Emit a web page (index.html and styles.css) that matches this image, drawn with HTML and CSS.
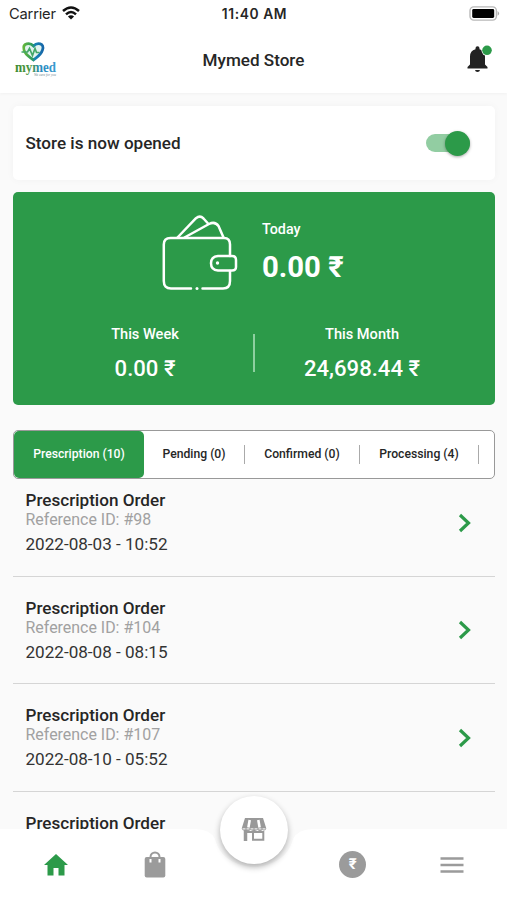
FILE: index.html
```html
<!DOCTYPE html>
<html lang="en">
<head>
<meta charset="utf-8">
<title>Mymed Store</title>
<link rel="stylesheet" href="styles.css">
</head>
<body>
<div class="app">
  <header class="top">
    <div class="status">
      <div class="carrier">Carrier
        <svg width="18" height="14" viewBox="0 0 18 14" fill="none" stroke="#111" stroke-width="2.5"><path d="M1 5Q9-2 17 5M4 8.3Q9 3.6 14 8.3"/><path d="M9 13.6L5.9 10.5Q9 7.8 12.1 10.5Z" fill="#111" stroke="none"/></svg>
      </div>
      <div class="clock">11:40 AM</div>
      <svg class="battery" width="31" height="15" viewBox="0 0 31 15"><rect x="1" y=".9" width="26.4" height="13.2" rx="3.8" fill="#fff" stroke="#b8b8b8" stroke-width="1.4"/><rect x="3.200" y="3" width="22" height="9" rx="1.4" fill="#000"/><path d="M28.6 5q3 2.400 0 4.800z" fill="#aaa"/></svg>
    </div>
    <div class="bar">
      <svg class="logo" width="44" height="36" viewBox="0 0 44 36">
        <defs>
          <linearGradient id="heart"><stop offset="0" stop-color="#62b53b"/><stop offset=".45" stop-color="#2c9b62"/><stop offset=".6" stop-color="#1683b5"/><stop offset="1" stop-color="#1767a8"/></linearGradient>
          <linearGradient id="word"><stop offset="0" stop-color="#3d8a32"/><stop offset=".4" stop-color="#4b9a49"/><stop offset=".6" stop-color="#2489bd"/><stop offset="1" stop-color="#3c9bd0"/></linearGradient>
        </defs>
        <path d="M10 8C8 1 16 0 19.500 4C23 0 31 1 28.500 8C27 13 23 15 19.500 18C16 15 11 13 10 8Z" fill="#e2f3ef" stroke="url(#heart)" stroke-width="2.700"/>
        <path d="M7.500 10h6l2-3.500 3 7 2.500-7 1.500 4h3" fill="none" stroke="#43a768" stroke-width="1.700"/>
        <text class="word" x="1" y="29.500" textLength="41" lengthAdjust="spacingAndGlyphs" fill="url(#word)">mymed</text>
        <text class="tag" x="20" y="33.500" textLength="22" lengthAdjust="spacingAndGlyphs">We care for you</text>
      </svg>
      <h1>Mymed Store</h1>
      <svg class="bell" width="26" height="30" viewBox="0 0 26 30"><path d="M.5 24.500v-1.500l2.500-2.500V12.500Q3 6.500 8.500 5.200V4.200a2 2 0 0 1 4 0v1Q18 6.500 18 12.500V20.500l2.500 2.500v1.500zM8 26h5q-.3 2.100-2.500 2.100T8 26z" fill="#222"/><circle cx="20" cy="6.300" r="5.500" fill="#fff"/><circle cx="20" cy="6.300" r="4.800" fill="#2c9a49"/></svg>
    </div>
  </header>

  <main class="content">
    <section class="store">
      <span>Store is now opened</span>
      <div class="switch"><i></i></div>
    </section>

    <section class="earnings">
      <div class="today">
        <svg width="76" height="76" viewBox="0 0 76 76" fill="none" stroke="#fff" stroke-width="2.500" stroke-linecap="round" stroke-linejoin="round"><path d="M29 73.500H9Q1.800 73.500 1.800 66V29.500Q1.800 23 8.500 23H62Q68 23 68 29.500V41M68 56V66Q68 73.500 61 73.500H40.500"/><path d="M15.500 22.500L34 3.200Q38 0 41.500 3.500L46.500 9M22.500 22.500L47 9Q53 6 56.500 11L61.500 22.500"/><path d="M56 41H70Q74 41 74 45V52Q74 55.500 70 55.500H56Q49 55 49 48.300T56 41Z"/><g fill="#fff" stroke="none"><circle cx="55.500" cy="48" r="1.700"/><circle cx="35" cy="73.500" r="1.500"/></g></svg>
        <div><div class="label">Today</div><div class="amount big">0.00 ₹</div></div>
      </div>
      <div class="periods">
        <div class="period"><div class="label">This Week</div><div class="amount">0.00 ₹</div></div>
        <div class="rule"></div>
        <div class="period month"><div class="label">This Month</div><div class="amount">24,698.44 ₹</div></div>
      </div>
    </section>

    <nav class="tabs">
      <span class="tab active">Prescription (10)</span>
      <span class="tab pending">Pending (0)</span>
      <span class="tab confirmed">Confirmed (0)</span>
      <span class="tab processing">Processing (4)</span>
    </nav>

    <section class="orders">
      <article class="order"><div><h2>Prescription Order</h2><p class="ref">Reference ID: #98</p><p class="date">2022-08-03 - 10:52</p></div><svg width="14" height="20" viewBox="0 0 14 20"><path d="M2 2l8.500 8L2 18" fill="none" stroke="#2c9a49" stroke-width="3.200"/></svg></article>
      <article class="order"><div><h2>Prescription Order</h2><p class="ref">Reference ID: #104</p><p class="date">2022-08-08 - 08:15</p></div><svg width="14" height="20" viewBox="0 0 14 20"><path d="M2 2l8.500 8L2 18" fill="none" stroke="#2c9a49" stroke-width="3.200"/></svg></article>
      <article class="order"><div><h2>Prescription Order</h2><p class="ref">Reference ID: #107</p><p class="date">2022-08-10 - 05:52</p></div><svg width="14" height="20" viewBox="0 0 14 20"><path d="M2 2l8.500 8L2 18" fill="none" stroke="#2c9a49" stroke-width="3.200"/></svg></article>
      <article class="order"><div><h2>Prescription Order</h2></div></article>
    </section>
  </main>

  <nav class="dock">
    <svg class="dock-shape" width="507" height="71" viewBox="0 0 507 71"><path d="M0 0H195Q210 0 215 10C224 47 284 47 293 10Q298 0 313 0H507V71H0Z" fill="#fff"/></svg>
    <div class="item"><svg width="26" height="24" viewBox="0 0 26 24"><path d="M13 1L25 12H21.500V22.500H15.500V15H10.500V22.500H4.500V12H1Z" fill="#2c9a49"/></svg></div>
    <div class="item"><svg width="22" height="28" viewBox="0 0 22 28"><path d="M6.500 9V6a4.500 4.500 0 0 1 9 0V9" fill="none" stroke="#9b9b9b" stroke-width="2"/><rect x=".7" y="6" width="20.600" height="20.500" rx="2" fill="#9b9b9b"/><path d="M6.500 8v3.500M15.500 8v3.500" stroke="#fff" stroke-width="2"/></svg></div>
    <div class="item"></div>
    <div class="item"><div class="coin">₹</div></div>
    <div class="item"><svg width="24" height="18" viewBox="0 0 24 18"><path d="M.5 2.500h23M.5 9h23M.5 15.500h23" stroke="#9b9b9b" stroke-width="2.300"/></svg></div>
    <div class="fab"><svg width="26" height="26" viewBox="0 0 26 26"><path d="M4 1H22L25.300 11.500Q24.500 14.500 21.500 13Q19 15 16.500 13Q13 15 9.500 13Q7 15 4.500 13Q1.500 14.500.7 11.500Z" fill="#999"/><path d="M8.700 3L7.400 10.500M17.300 3L18.600 10.500" stroke="#fff" stroke-width="2.600"/><path d="M1.500 11.900H24.500" stroke="#fff" stroke-width="1" stroke-dasharray="3 1"/><path d="M4.500 13V24" stroke="#999" stroke-width="3.500"/><path d="M3 15H23M12 15V22.700H22.300V14" fill="none" stroke="#999" stroke-width="2"/></svg></div>
  </nav>
</div>
</body>
</html>
```
FILE: styles.css
```css
* { box-sizing: border-box; }
body { margin: 0; background: #fafafa; color: #262626; font-family: Roboto, sans-serif; }
svg { display: block; flex: none; }
h1, h2, p { margin: 0; }
.app { width: 507px; height: 900px; display: flex; flex-direction: column; overflow: hidden; }

.top { height: 93px; flex: none; background: #fff; box-shadow: 0 1px 3px rgba(0, 0, 0, .04); }
.status { height: 28px; display: grid; grid-template-columns: 1fr auto 1fr; align-items: center; padding: 0 7px 0 9px; }
.carrier { display: flex; align-items: center; gap: 6px; font: 14.700px/28px Inter, sans-serif; letter-spacing: -.2px; }
.carrier svg { margin-top: -2px; }
.clock { font: 600 13.800px/28px Inter, sans-serif; letter-spacing: .6px; }
.battery { justify-self: end; margin-top: -2px; }
.bar { height: 64px; display: grid; grid-template-columns: 1fr auto 1fr; align-items: center; padding: 0 14px; }
.logo { overflow: visible; }
.logo .word { font: 700 14px "Liberation Serif", serif; }
.logo .tag { font: italic 3px "Liberation Serif", serif; fill: #6e8791; }
h1 { font-size: 17.100px; font-weight: 500; }
.bell { justify-self: end; margin: -3px 0 0; }

.content { flex: 1; min-height: 0; overflow: hidden; padding: 13px 12px 0 13px; display: flex; flex-direction: column; }
.store { height: 74px; flex: none; border-radius: 5px; background: #fff; box-shadow: 0 0 8px rgba(0, 0, 0, .035); padding: 0 25px 0 12.500px; display: flex; align-items: center; justify-content: space-between; font-size: 17.100px; font-weight: 500; }
.switch { width: 44px; height: 18px; border-radius: 9px; background: #92cda2; display: flex; align-items: center; justify-content: flex-end; }
.switch i { width: 25px; height: 25px; border-radius: 50%; background: #2c9a49; box-shadow: 0 1px 3px rgba(0, 0, 0, .35); }

.earnings { height: 213px; flex: none; margin-top: 12px; border-radius: 5px; background: #2c9a49; color: #fff; padding-top: 23px; }
.today { height: 76px; display: flex; gap: 24px; padding-left: 149px; }
.label { font-size: 14.600px; line-height: 18px; font-weight: 500; }
.today .label { margin-top: 5px; font-size: 14.300px; }
.amount { font-size: 22.100px; line-height: 26px; font-weight: 500; margin-top: 12px; }
.amount.big { font-size: 29.300px; line-height: 34px; font-weight: 700; margin-top: 12px; }
.periods { display: grid; grid-template-columns: 1fr 2px 1fr; padding: 0 24px; margin-top: 34px; }
.period { text-align: center; }
.month { padding-right: 2px; }
.rule { height: 38px; margin-top: 9px; background: #8ed0a0; }

.tabs { height: 49px; flex: none; margin-top: 25px; border: 1px solid #999; border-radius: 5px; background: #fff; display: flex; align-items: center; font-size: 12.200px; font-weight: 500; }
.tab { height: 19px; line-height: 18px; text-align: center; border-right: 1.500px solid #aaa; }
.tab.active { width: 130px; height: 47px; line-height: 46px; border: 0; border-radius: 5px; background: #2c9a49; color: #fff; }
.pending { width: 101px; }
.confirmed { width: 115px; }
.processing { width: 119px; }

.orders { flex: none; margin-top: -10px; }
.order { height: 107.500px; padding: 21px 23px 0 12.500px; border-bottom: 1px solid #d5d5d5; display: flex; justify-content: space-between; }
.order svg { margin-top: 22.500px; }
h2 { font-size: 17.100px; line-height: 20px; font-weight: 500; }
.ref { font-size: 15.950px; line-height: 18px; margin-top: 1px; color: #a1a1a1; }
.date { font-size: 17.100px; line-height: 20px; margin-top: 5px; color: #333; }

.dock { position: relative; height: 71px; flex: none; display: grid; grid-template-columns: repeat(5, 98.800px); padding-left: 7px; }
.dock-shape { position: absolute; left: 0; top: 0; }
.item { position: relative; height: 71px; display: flex; justify-content: center; align-items: center; }
.coin { width: 27px; height: 27px; border-radius: 50%; background: #9b9b9b; color: #fff; font-size: 15px; line-height: 27px; font-weight: 700; text-align: center; }
.fab { position: absolute; left: 220px; top: -33px; width: 68px; height: 68px; border-radius: 50%; background: #fff; box-shadow: 0 3px 6px rgba(0, 0, 0, .3); display: flex; align-items: center; justify-content: center; }
```
